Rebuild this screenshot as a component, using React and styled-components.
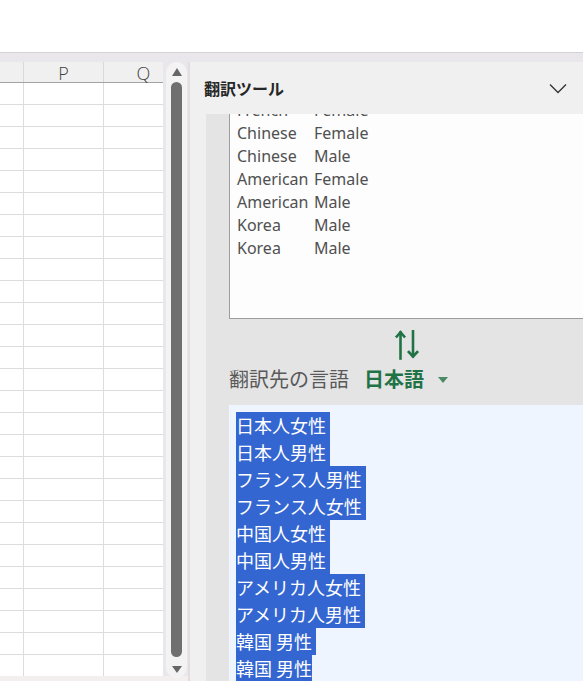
import React from "react";
import styled, { createGlobalStyle } from "styled-components";

const Global = createGlobalStyle`
  html, body { margin: 0; padding: 0; }
  body {
    width: 583px;
    height: 681px;
    overflow: hidden;
    background: #ffffff;
    font-family: "Noto Sans", "Noto Sans CJK JP", sans-serif;
  }
  * { box-sizing: border-box; }
`;

const Root = styled.div`
  display: flex;
  flex-direction: column;
  width: 583px;
  height: 681px;
`;

const TopBar = styled.div`
  height: 53px;
  flex: none;
  background: #ffffff;
  border-bottom: 1px solid #d3d3d3;
`;

const Workspace = styled.div`
  flex: 1;
  display: flex;
  background: #e9e7ec;
  padding-top: 9px;
  min-height: 0;
`;

const SheetArea = styled.div`
  width: 188px;
  flex: none;
  display: flex;
  align-items: flex-start;
  gap: 3px;
  background: linear-gradient(to bottom, transparent 614px, #f3efef 614px);
`;

const Sheet = styled.div`
  width: 163px;
  height: 614px;
  background: #ffffff;
  overflow: hidden;
`;

const SheetRow = styled.div`
  display: grid;
  grid-template-columns: 24px 80px 80px;
  height: ${(p) => (p.$header ? "21px" : "22px")};
  background: ${(p) => (p.$header ? "#f0f0f0" : "#ffffff")};
  border-bottom: 1px solid ${(p) => (p.$header ? "#a3a3a3" : "#dcdcdc")};
`;

const Cell = styled.div`
  border-right: 1px solid ${(p) => (p.$header ? "#d9d9d9" : "#dcdcdc")};
  display: flex;
  align-items: center;
  justify-content: center;
  font-family: "Open Sans", "Noto Sans", sans-serif;
  font-size: 18px;
  font-weight: 300;
  color: #3f3f3f;
  line-height: 1;
  padding-top: 1px;
`;

const Scroller = styled.div`
  width: 21px;
  height: 616px;
  border-radius: 11px;
  background: #f4f3f3;
  display: flex;
  flex-direction: column;
  align-items: center;
  padding: 6px 0 5px;
`;

const Arrow = styled.div`
  width: 0;
  height: 0;
  border-left: 5.5px solid transparent;
  border-right: 5.5px solid transparent;
  ${(p) =>
    p.$up
      ? "border-bottom: 8px solid #666666;"
      : "border-top: 7px solid #666666;"}
`;

const Thumb = styled.div`
  flex: 1;
  width: 11px;
  border-radius: 6px;
  background: #6f6f6f;
  margin: 6px 0 9px;
`;

const Panel = styled.div`
  flex: 1;
  display: flex;
  flex-direction: column;
  background: #f0f0f0;
  border-left: 2px solid #e3dde0;
  min-width: 0;
`;

const PanelHeader = styled.div`
  height: 52px;
  flex: none;
  display: flex;
  align-items: center;
  justify-content: space-between;
  padding: 0 16px 0 14px;
`;

const Title = styled.div`
  font-family: "Noto Sans CJK JP", sans-serif;
  font-size: 16px;
  font-weight: 700;
  color: #262626;
`;

const PanelBody = styled.div`
  flex: 1;
  min-height: 0;
  padding-left: 16px;
  overflow: hidden;
`;

const BodyInner = styled.div`
  height: 100%;
  background: #e4e4e4;
  padding-left: 23px;
  overflow: hidden;
`;

const ScrollContent = styled.div`
  width: 358px;
  margin-top: -21px;
`;

const SourceBox = styled.div`
  height: 226px;
  border: 1px solid #9c9c9c;
  background: #fdfdfd;
  padding: 5px 7px;
  display: grid;
  grid-template-columns: 77px auto;
  align-content: start;
  font-family: "Noto Sans", sans-serif;
  font-size: 16px;
  line-height: 23px;
  color: #505050;
`;

const SwapRow = styled.div`
  display: flex;
  justify-content: center;
  margin-top: 11px;
  height: 30px;
`;

const LangRow = styled.div`
  display: flex;
  align-items: center;
  height: 32px;
  margin-top: 2px;
  font-family: "Noto Sans CJK JP", sans-serif;
  font-size: 20px;
`;

const LangLabel = styled.span`
  color: #595959;
`;

const LangValue = styled.span`
  color: #217346;
  font-weight: 700;
  margin-left: 15px;
`;

const Caret = styled.span`
  width: 0;
  height: 0;
  margin-left: 14px;
  margin-top: 3px;
  border-left: 5px solid transparent;
  border-right: 5px solid transparent;
  border-top: 6px solid #4b8a64;
`;

const ResultBox = styled.div`
  margin-top: 11px;
  height: 320px;
  background: #eef5ff;
  padding: 7px 7px;
  font-family: "Noto Sans CJK JP", sans-serif;
  font-size: 18px;
`;

const ResultLine = styled.div`
  height: 27px;
`;

const Selected = styled.span`
  display: inline-block;
  height: 27px;
  line-height: 26px;
  background: #3466d1;
  color: #ffffff;
  padding-right: ${(p) => (p.$last ? "0" : "4px")};
  white-space: pre;
`;

const SwapIcon = () => (
  <svg width="26" height="30" viewBox="0 0 26 30" fill="none">
    <g stroke="#217346" strokeWidth="2.6" strokeLinecap="square">
      <path d="M5.5 2.5 V28.5" />
      <path d="M1.8 6.5 L5.5 2.2 L9.2 6.5" strokeLinejoin="miter" />
      <path d="M18 1 V26" />
      <path d="M13.8 22 L18 26.5 L22.2 22" strokeLinejoin="miter" />
    </g>
  </svg>
);

const Chevron = () => (
  <svg width="18" height="11" viewBox="0 0 18 11" fill="none">
    <path d="M1 1.5 L9 9.5 L17 1.5" stroke="#333333" strokeWidth="1.3" />
  </svg>
);

const source = [
  ["French", "Female"],
  ["Chinese", "Female"],
  ["Chinese", "Male"],
  ["American", "Female"],
  ["American", "Male"],
  ["Korea", "Male"],
  ["Korea", "Male"],
];

const results = [
  "日本人女性",
  "日本人男性",
  "フランス人男性",
  "フランス人女性",
  "中国人女性",
  "中国人男性",
  "アメリカ人女性",
  "アメリカ人男性",
  "韓国 男性",
  "韓国 男性",
];

export default function App() {
  const rows = Array.from({ length: 28 });
  return (
    <>
      <Global />
      <Root>
        <TopBar />
        <Workspace>
          <SheetArea>
            <Sheet>
              <SheetRow $header>
                <Cell $header />
                <Cell $header>P</Cell>
                <Cell $header>Q</Cell>
              </SheetRow>
              {rows.map((_, i) => (
                <SheetRow key={i}>
                  <Cell />
                  <Cell />
                  <Cell />
                </SheetRow>
              ))}
            </Sheet>
            <Scroller>
              <Arrow $up />
              <Thumb />
              <Arrow />
            </Scroller>
          </SheetArea>
          <Panel>
            <PanelHeader>
              <Title>翻訳ツール</Title>
              <Chevron />
            </PanelHeader>
            <PanelBody>
              <BodyInner>
                <ScrollContent>
                  <SourceBox>
                    {source.map(([a, b], i) => (
                      <React.Fragment key={i}>
                        <span>{a}</span>
                        <span>{b}</span>
                      </React.Fragment>
                    ))}
                  </SourceBox>
                  <SwapRow>
                    <SwapIcon />
                  </SwapRow>
                  <LangRow>
                    <LangLabel>翻訳先の言語</LangLabel>
                    <LangValue>日本語</LangValue>
                    <Caret />
                  </LangRow>
                  <ResultBox>
                    {results.map((t, i) => (
                      <ResultLine key={i}>
                        <Selected $last={i === results.length - 1}>{t}</Selected>
                      </ResultLine>
                    ))}
                  </ResultBox>
                </ScrollContent>
              </BodyInner>
            </PanelBody>
          </Panel>
        </Workspace>
      </Root>
    </>
  );
}
